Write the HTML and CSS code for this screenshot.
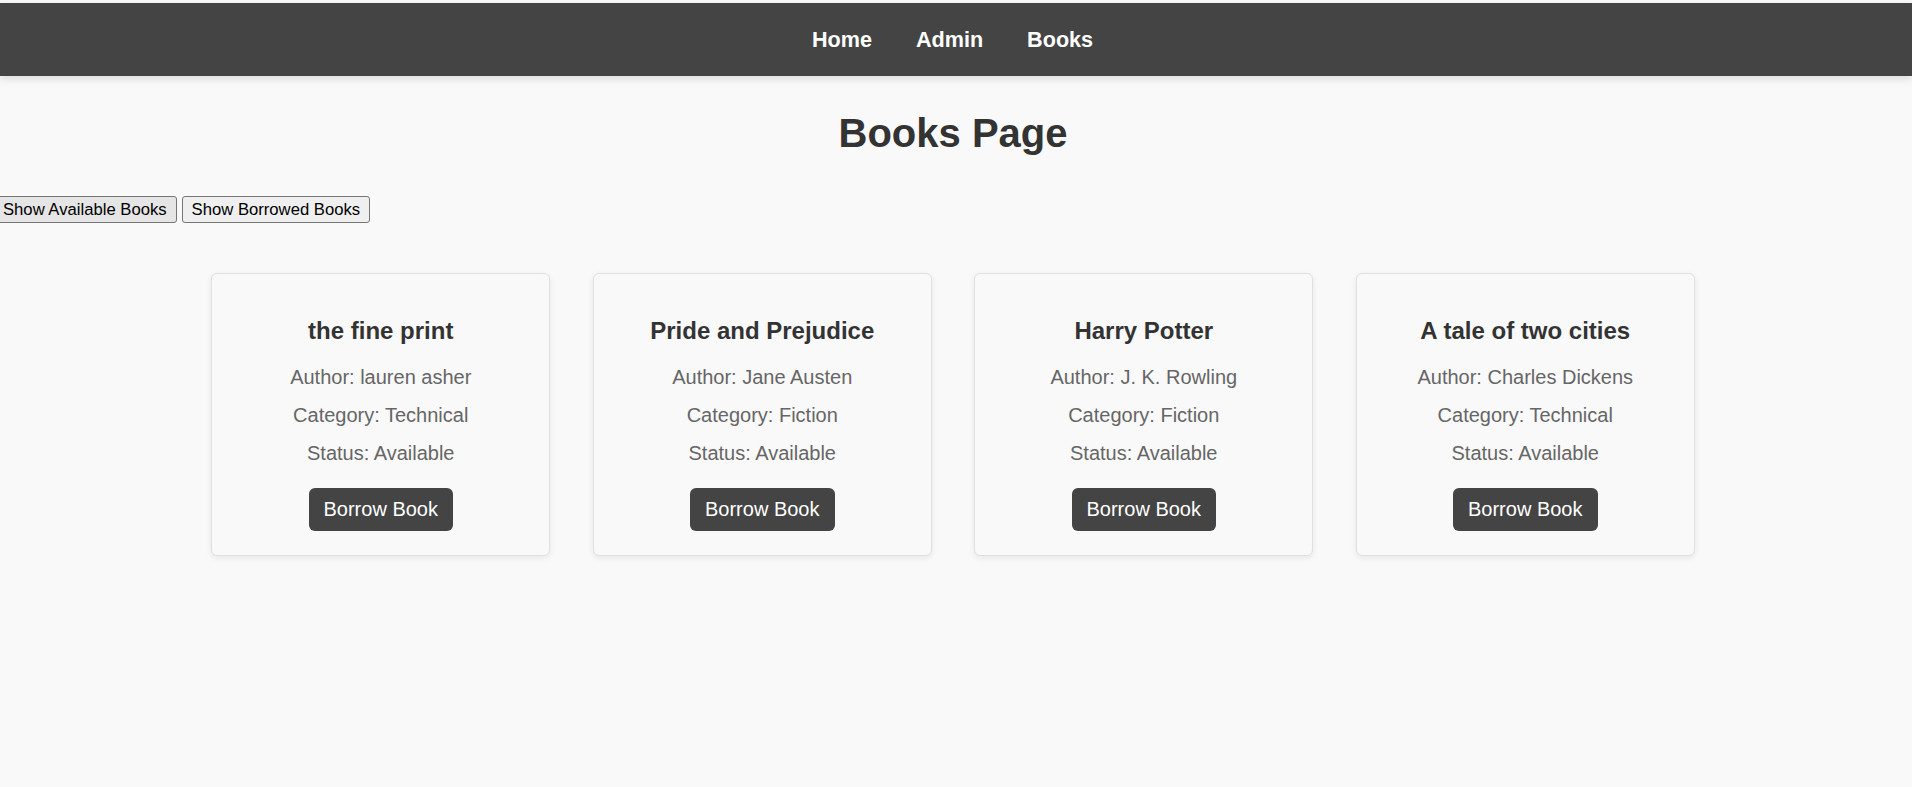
FILE: index.html
```html
<!DOCTYPE html>
<html lang="en">
<head>
<meta charset="utf-8">
<title>Books Page</title>
<link rel="stylesheet" href="styles.css">
</head>
<body>
<div class="page">
  <nav class="navbar">
    <a class="nav-link" href="#">Home</a>
    <a class="nav-link" href="#">Admin</a>
    <a class="nav-link" href="#">Books</a>
  </nav>
  <main class="main">
    <h1 class="title">Books Page</h1>
    <div class="filters">
      <button class="filter-btn filter-btn--active">Show Available Books</button>
      <button class="filter-btn">Show Borrowed Books</button>
    </div>
    <div class="cards">
      <div class="card">
        <h3 class="card-title">the fine print</h3>
        <p class="card-line">Author: lauren asher</p>
        <p class="card-line">Category: Technical</p>
        <p class="card-line">Status: Available</p>
        <button class="borrow-btn">Borrow Book</button>
      </div>
      <div class="card">
        <h3 class="card-title">Pride and Prejudice</h3>
        <p class="card-line">Author: Jane Austen</p>
        <p class="card-line">Category: Fiction</p>
        <p class="card-line">Status: Available</p>
        <button class="borrow-btn">Borrow Book</button>
      </div>
      <div class="card">
        <h3 class="card-title">Harry Potter</h3>
        <p class="card-line">Author: J. K. Rowling</p>
        <p class="card-line">Category: Fiction</p>
        <p class="card-line">Status: Available</p>
        <button class="borrow-btn">Borrow Book</button>
      </div>
      <div class="card">
        <h3 class="card-title">A tale of two cities</h3>
        <p class="card-line">Author: Charles Dickens</p>
        <p class="card-line">Category: Technical</p>
        <p class="card-line">Status: Available</p>
        <button class="borrow-btn">Borrow Book</button>
      </div>
    </div>
  </main>
</div>
</body>
</html>
```
FILE: styles.css
```css
* { box-sizing: border-box; }

html, body {
  margin: 0;
  padding: 0;
  background: #f9f9f9;
  font-family: "Liberation Sans", Arial, sans-serif;
  overflow: hidden;
}

.page {
  margin-right: 6px;
  padding-top: 3px;
  min-height: 787px;
}

.navbar {
  height: 73px;
  background: #444444;
  display: flex;
  justify-content: center;
  align-items: center;
  gap: 44px;
  box-shadow: 0 3px 8px rgba(0, 0, 0, 0.12);
  margin-right: -6px;
  padding-right: 7px;
}

.nav-link {
  color: #ffffff;
  text-decoration: none;
  font-weight: bold;
  font-size: 21.6px;
  line-height: 25px;
}

.main {
  display: flex;
  flex-direction: column;
}

.title {
  margin: 34px 0 40px;
  text-align: center;
  font-size: 40px;
  line-height: 46px;
  font-weight: bold;
  color: #333333;
}

.filters {
  display: flex;
  gap: 5px;
  margin-left: -7px;
}

.filter-btn {
  font-family: "Liberation Sans", Arial, sans-serif;
  font-size: 16.67px;
  line-height: 19px;
  padding: 3px 9px;
  border: 1px solid #767676;
  border-radius: 3px;
  background: #efefef;
  color: #000000;
}

.filter-btn--active {
  background: #e5e5e5;
}

.cards {
  display: flex;
  justify-content: center;
  gap: 42.5px;
  margin-top: 50px;
}

.card {
  width: 339px;
  display: flex;
  flex-direction: column;
  align-items: center;
  text-align: center;
  padding: 20px 20px 24px;
  border: 1px solid #e0e0e0;
  border-radius: 6px;
  background: #f9f9f9;
  box-shadow: 0 2px 6px rgba(0, 0, 0, 0.08);
}

.card-title {
  margin: 23px 0 22px;
  font-size: 24px;
  line-height: 27px;
  font-weight: bold;
  color: #333333;
}

.card-line {
  margin: 0 0 15px;
  font-size: 20px;
  line-height: 23px;
  color: #666666;
}

.card-line:last-of-type {
  margin-bottom: 23px;
}

.borrow-btn {
  font-family: "Liberation Sans", Arial, sans-serif;
  font-size: 20px;
  line-height: 23px;
  padding: 10px 15px;
  border: none;
  border-radius: 6px;
  background: #444444;
  color: #ffffff;
}
```
